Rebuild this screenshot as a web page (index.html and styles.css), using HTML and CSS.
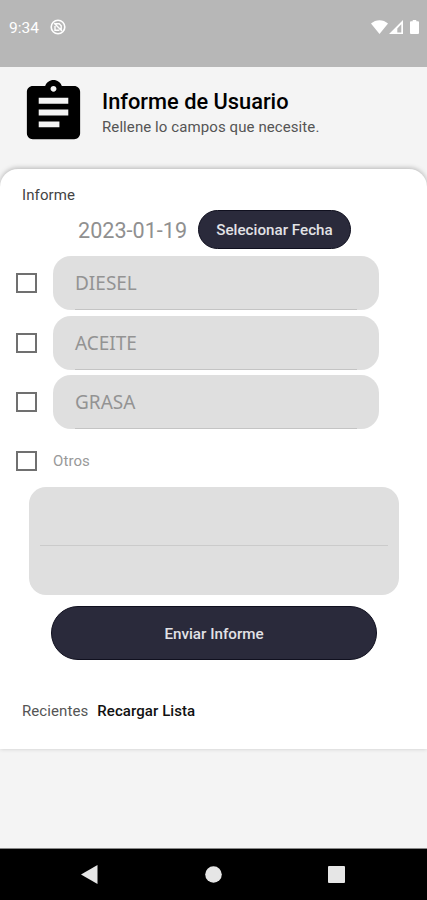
FILE: index.html
```html
<!DOCTYPE html>
<html lang="es">
<head>
    <meta charset="UTF-8">
    <meta name="viewport" content="width=device-width, initial-scale=1.0">
    <title>Informe de Usuario</title>
    <link rel="stylesheet" href="styles.css">
</head>
<body>
    <div class="status-bar">
        <span class="time">9:34</span>
        <svg class="icon-notif" width="16" height="16" viewBox="0 0 16 16" fill="none" stroke="#fff">
            <circle cx="8" cy="8" r="6.8" stroke-width="1.6"/>
            <path d="M5.4 4.8h3.8l2 2v4.4M5 7v4.2h4.4M4.2 4.2l7.8 7.8" stroke-width="1.4"/>
        </svg>
        <div class="status-icons">
            <svg width="17" height="14" viewBox="0 0 17 14" fill="#fff"><path d="M0 3.6C4.8-1 12.2-1 17 3.6L8.5 14z"/></svg>
            <svg width="14" height="14" viewBox="0 0 14 14"><path d="M0 14L14 0v14zM8.3 12.4h4V4.2l-4 4.2z" fill="#fff" fill-rule="evenodd"/></svg>
            <svg class="battery" width="9" height="14" viewBox="0 0 9 14" fill="#fff"><path d="M2.7 0h3.6v1.3H8a1 1 0 0 1 1 1V13a1 1 0 0 1-1 1H1a1 1 0 0 1-1-1V2.3a1 1 0 0 1 1-1h1.7z"/></svg>
        </div>
    </div>

    <header class="header">
        <svg class="logo" viewBox="0 0 24 24"><path d="M19 3h-4.18C14.4 1.84 13.3 1 12 1c-1.3 0-2.4.84-2.82 2H5c-1.1 0-2 .9-2 2v14c0 1.1.9 2 2 2h14c1.1 0 2-.9 2-2V5c0-1.1-.9-2-2-2zm-7 0c.55 0 1 .45 1 1s-.45 1-1 1-1-.45-1-1 .45-1 1-1zm2 14H7v-2h7v2zm3-4H7v-2h10v2zm0-4H7V7h10v2z"/></svg>
        <div class="header-text">
            <h1>Informe de Usuario</h1>
            <p>Rellene lo campos que necesite.</p>
        </div>
    </header>

    <main class="card">
        <div class="label">Informe</div>
        <div class="date-row">
            <span class="date">2023-01-19</span>
            <button class="button button-date">Selecionar Fecha</button>
        </div>

        <div class="row">
            <span class="check"></span>
            <div class="field">DIESEL</div>
        </div>
        <div class="row">
            <span class="check"></span>
            <div class="field">ACEITE</div>
        </div>
        <div class="row">
            <span class="check"></span>
            <div class="field">GRASA</div>
        </div>
        <div class="row row-otros">
            <span class="check"></span>
            <span class="otros">Otros</span>
        </div>

        <div class="notes"><div class="notes-line"></div></div>
        <button class="button button-send">Enviar Informe</button>

        <div class="recent">
            <span>Recientes</span>
            <strong>Recargar Lista</strong>
        </div>
    </main>

    <nav class="nav-bar">
        <svg width="17" height="19" viewBox="0 0 17 19"><path d="M0 9.5L16.5 0v19z"/></svg>
        <svg width="17" height="17" viewBox="0 0 17 17"><circle cx="8.5" cy="8.5" r="8.3"/></svg>
        <svg width="17" height="17" viewBox="0 0 17 17"><rect width="17" height="17" rx="1"/></svg>
    </nav>
</body>
</html>
```
FILE: styles.css
```css
* {
    box-sizing: border-box;
}
body {
    margin: 0;
    height: 900px;
    display: flex;
    flex-direction: column;
    overflow: hidden;
    background: #f4f4f4;
    font-family: Roboto, sans-serif;
    color: #000;
}
svg {
    display: block;
    flex-shrink: 0;
}
.status-bar {
    height: 67px;
    padding: 0 8px 13px 9px;
    display: flex;
    align-items: center;
    background: #b7b7b7;
    color: #fff;
}
.time {
    width: 41px;
    padding-top: 1px;
    font-size: 15.5px;
}
.status-icons {
    margin-left: auto;
    display: flex;
    gap: 1px;
}
.battery {
    margin-left: 6px;
}
.header {
    height: 102px;
    padding: 0 0 12px 18px;
    display: flex;
    align-items: center;
    gap: 13px;
}
.logo {
    width: 71px;
    height: 71px;
}
.header-text {
    padding-top: 3px;
}
.header h1 {
    margin: 0;
    font-size: 21.8px;
    line-height: 26px;
    font-weight: 500;
    white-space: nowrap;
}
.header p {
    margin: 0;
    font-size: 15px;
    line-height: 24px;
    letter-spacing: 0.09px;
    color: #555;
    white-space: nowrap;
}
.card {
    height: 580px;
    padding-top: 16px;
    background: #fff;
    border-radius: 18px 18px 0 0;
    box-shadow: 0 -1px 5px rgba(0, 0, 0, 0.26);
}
.label {
    margin-left: 22px;
    font-size: 15px;
    line-height: 21px;
    letter-spacing: 0.1px;
    color: #444;
}
.date-row {
    height: 39px;
    margin: 4px 0 7px 78px;
    display: flex;
    align-items: center;
}
.date {
    width: 120px;
    padding-top: 1px;
    font-size: 21.6px;
    color: #909090;
}
.button {
    display: block;
    padding: 0;
    border: 1px solid #10101f;
    background: #2a2a3b;
    color: #e2e2e6;
    font-family: inherit;
    font-size: 15.2px;
    font-weight: 500;
}
.button-date {
    width: 153px;
    height: 39px;
    border-radius: 20px;
}
.row {
    height: 54px;
    margin-bottom: 5.7px;
    padding-left: 16px;
    display: flex;
    align-items: center;
}
.check {
    width: 21px;
    height: 20px;
    margin-right: 16px;
    border: 2px solid #707070;
}
.field {
    width: 326px;
    height: 54px;
    padding-left: 22px;
    border-radius: 18px;
    background: linear-gradient(#c4c4c4, #c4c4c4) center bottom / 282px 1px no-repeat #dfdfdf;
    font-family: "Noto Sans", sans-serif;
    font-size: 19px;
    line-height: 54px;
    color: #939393;
}
.row-otros {
    height: 52px;
    margin-bottom: 0;
}
.otros {
    font-size: 15px;
    letter-spacing: 0.1px;
    color: #999;
}
.notes {
    width: 370px;
    height: 108px;
    margin-left: 29px;
    padding: 58px 11px 0;
    border-radius: 17px;
    background: #dfdfdf;
}
.notes-line {
    height: 1px;
    background: #cbcbcb;
}
.button-send {
    width: 326px;
    height: 54px;
    margin: 11px 0 0 51px;
    padding-top: 1px;
    border-radius: 27px;
}
.recent {
    margin: 41px 0 0 22px;
    display: flex;
    gap: 9px;
    font-size: 15px;
    line-height: 20px;
    letter-spacing: 0.08px;
    color: #555;
    white-space: nowrap;
}
.recent strong {
    font-weight: 500;
    color: #111;
}
.nav-bar {
    height: 52px;
    margin-top: auto;
    padding: 0 82px 1px 81px;
    display: flex;
    align-items: center;
    justify-content: space-between;
    border-top: 1px solid #888;
    background: #000;
    fill: #e6e6e6;
}
```
